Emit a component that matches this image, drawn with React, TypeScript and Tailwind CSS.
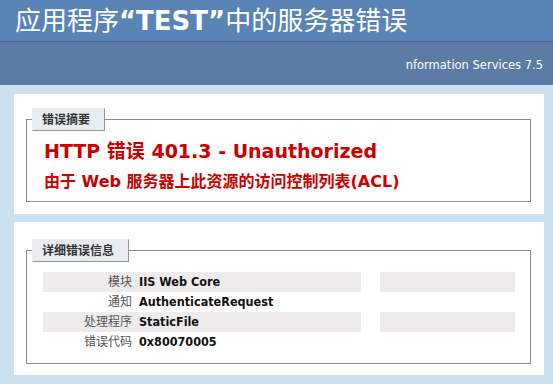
import React from "react";

const details = [
  { label: "模块", value: "IIS Web Core", alt: true },
  { label: "通知", value: "AuthenticateRequest", alt: false },
  { label: "处理程序", value: "StaticFile", alt: true },
  { label: "错误代码", value: "0x80070005", alt: false },
];

const font = "font-['DejaVu_Sans','Noto_Sans_CJK_SC',sans-serif]";

const Legend = ({ children }: { children: React.ReactNode }) => (
  <legend className="ml-[5px] h-[23px] pl-[9px] pr-[14px] flex items-center bg-[#e7ecf0] border-t border-l border-t-[#ededed] border-l-[#ededed] border-r border-b border-r-[#969696] border-b-[#969696] text-[12px] font-bold text-[#333]">
    {children}
  </legend>
);

const App = () => {
  return (
    <div className={`w-[553px] h-[384px] overflow-hidden bg-[#cbe1ef] ${font}`}>
      {/* header */}
      <div className="h-[41px] bg-[#5a84b6] flex items-center pl-[15px] text-white text-[26px] leading-none">
        应用程序<span className="font-bold">“TEST”</span>中的服务器错误
      </div>
      <div className="h-px bg-[#46678f]" />
      <div className="h-[43px] bg-[#5b7ba5] flex items-center justify-end pt-[4px] pr-[10px] text-[11.5px] text-white">
        nformation Services 7.5
      </div>

      <div className="pt-[9px] pl-[14px] flex flex-col gap-[8px]">
        {/* summary */}
        <div className="w-[530px] h-[120px] bg-white pt-[14px] pl-[12px] pr-[13px]">
          <fieldset className="border border-[#8c8c8c] h-[94px] px-0">
            <Legend>错误摘要</Legend>
            <div className="pl-[17px] pt-[8px]">
              <h2 className="text-[19px] font-bold text-[#cc0000] leading-[24px]">
                HTTP 错误 401.3 - Unauthorized
              </h2>
              <h3 className="mt-[9px] text-[16px] font-bold text-[#cc0000] leading-[20px]">
                由于 Web 服务器上此资源的访问控制列表(ACL)
              </h3>
            </div>
          </fieldset>
        </div>

        {/* details */}
        <div className="w-[530px] h-[153px] bg-white pt-[17px] pl-[12px] pr-[13px]">
          <fieldset className="border border-[#8c8c8c] h-[125px] px-0">
            <Legend>详细错误信息</Legend>
            <div className="pl-[16px] pt-[10px] flex flex-col">
              {details.map((d) => (
                <div key={d.label} className="flex h-[20px]">
                  <div
                    className={`w-[318px] flex items-center ${d.alt ? "bg-[#eeebed]" : ""}`}
                  >
                    <span className="w-[89px] text-right text-[12px] text-[#555]">
                      {d.label}
                    </span>
                    <span className="pl-[7px] text-[12.5px] font-bold text-[#111] font-['DejaVu_Sans_Condensed','DejaVu_Sans',sans-serif]">
                      {d.value}
                    </span>
                  </div>
                  <div
                    className={`ml-[19px] w-[135px] ${d.alt ? "bg-[#eeebed]" : ""}`}
                  />
                </div>
              ))}
            </div>
          </fieldset>
        </div>
      </div>
    </div>
  );
};

export default App;
